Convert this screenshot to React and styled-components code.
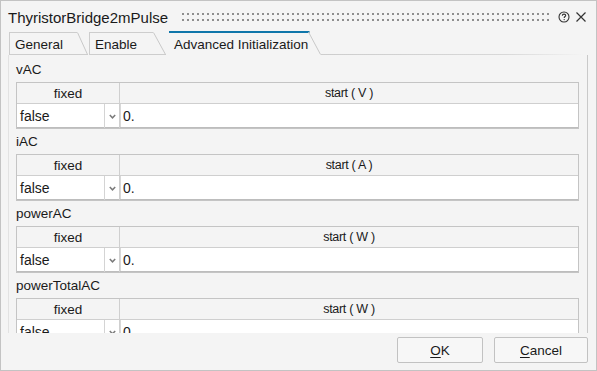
import styled, { createGlobalStyle } from "styled-components";

const GlobalStyle = createGlobalStyle`
  html, body {
    margin: 0;
    padding: 0;
    background: #f4f4f4;
  }
  body {
    font-family: "Liberation Sans", Arial, sans-serif;
    color: #1a1a1a;
  }
`;

const Window = styled.div`
  box-sizing: border-box;
  width: 597px;
  height: 371px;
  border: 1px solid #c3c3c3;
  background: #f4f4f4;
  display: flex;
  flex-direction: column;
  overflow: hidden;
`;

const TitleBar = styled.div`
  height: 30px;
  display: flex;
  align-items: center;
  padding: 2px 0 0 7px;
  box-sizing: border-box;
`;

const Title = styled.div`
  font-size: 15px;
  color: #1a1a1a;
  white-space: nowrap;
`;

const Grip = styled.div`
  flex: 1;
  height: 8px;
  margin: 0 6px 0 14px;
  position: relative;
  &::before,
  &::after {
    content: "";
    position: absolute;
    left: 0;
    right: 0;
    height: 2px;
    background: repeating-linear-gradient(
      90deg,
      #8e8e8e 0 2px,
      transparent 2px 5px
    );
  }
  &::before {
    top: 0;
  }
  &::after {
    top: 6px;
  }
`;

const TitleIcon = styled.svg`
  width: 12px;
  height: 12px;
  margin-right: ${(p) => p.$gap || 0}px;
`;

const TabBar = styled.div`
  height: 24px;
  display: flex;
  align-items: flex-end;
  padding-left: 8px;
`;

const Tab = styled.div`
  display: flex;
  height: ${(p) => (p.$active ? 24 : 23)}px;
  margin-right: ${(p) => p.$gap || 0}px;
`;

const TabFace = styled.div`
  box-sizing: border-box;
  width: ${(p) => p.$w}px;
  display: flex;
  align-items: center;
  padding-left: 5px;
  padding-top: ${(p) => (p.$active ? 0 : 1)}px;
  font-size: 13.5px;
  color: #1a1a1a;
  white-space: nowrap;
  border-top: ${(p) => (p.$active ? "2px solid #0f76aa" : "1px solid #cdcdcd")};
  border-left: ${(p) => (p.$active ? "none" : "1px solid #cdcdcd")};
  border-bottom: ${(p) => (p.$active ? "none" : "1px solid #cdcdcd")};
`;

const Slant = styled.svg`
  width: ${(p) => p.$w}px;
  height: 100%;
  display: block;
`;

const TabLine = styled.div`
  flex: 1;
  height: 1px;
  margin-right: 12px;
  background: linear-gradient(90deg, #cdcdcd 0%, #d8d8d8 70%, #f4f4f4 100%);
`;

const ScrollArea = styled.div`
  flex: 1;
  overflow: hidden;
  margin: 0 8px 0 7px;
  padding: 2px 8px 0 7px;
  border-left: 1px solid #e2e2e2;
  border-right: 1px solid #c9c9c9;
`;

const Section = styled.div`
  display: flex;
  flex-direction: column;
`;

const SectionLabel = styled.div`
  height: 25px;
  line-height: 25px;
  font-size: 13.5px;
  color: #1a1a1a;
`;

const Grid = styled.div`
  display: grid;
  grid-template-columns: 102px 1fr;
  grid-template-rows: 20px 24px;
  gap: 1px;
  border: 1px solid #c4c4c4;
  background: #cfcfcf;
`;

const HeadCell = styled.div`
  background: #f4f4f4;
  display: flex;
  align-items: center;
  justify-content: center;
  font-size: ${(p) => (p.$narrow ? 12.5 : 13.5)}px;
  letter-spacing: ${(p) => (p.$narrow ? "-0.3px" : "0")};
  color: #1a1a1a;
`;

const Combo = styled.div`
  background: #fff;
  display: flex;
  box-shadow: inset 0 -1px 0 #bdbdbd;
`;

const ComboText = styled.div`
  flex: 1;
  display: flex;
  align-items: center;
  padding-left: 3px;
  font-size: 14px;
  border-right: 1px solid #d4d4d4;
`;

const ComboArrow = styled.div`
  width: 14px;
  display: flex;
  align-items: center;
  justify-content: center;
`;

const ValueInput = styled.div`
  background: #fff;
  display: flex;
  align-items: center;
  padding-left: 3px;
  font-size: 14px;
  box-shadow: inset 0 -1px 0 #bdbdbd, inset 1px 0 0 #d8d8d8;
`;

const Footer = styled.div`
  height: 37px;
  box-sizing: border-box;
  display: flex;
  justify-content: flex-end;
  gap: 11px;
  padding: 4px 8px 0 0;
`;

const Button = styled.div`
  box-sizing: border-box;
  width: ${(p) => p.$w}px;
  height: 26px;
  border: 1px solid #c2c2c2;
  border-radius: 2px;
  background: #f7f7f7;
  display: flex;
  align-items: center;
  justify-content: center;
  font-size: 13.5px;
  color: #1a1a1a;
  & u {
    text-underline-offset: 2px;
  }
`;

const sections = [
  { name: "vAC", unit: "V" },
  { name: "iAC", unit: "A" },
  { name: "powerAC", unit: "W" },
  { name: "powerTotalAC", unit: "W" },
];

const tabs = [
  { label: "General", w: 68, slant: 11, gap: 1 },
  { label: "Enable", w: 64, slant: 13, gap: 3 },
  { label: "Advanced Initialization", w: 139, slant: 13, active: true },
];

function TabItem({ tab }) {
  const h = tab.active ? 24 : 23;
  return (
    <Tab $active={tab.active} $gap={tab.gap}>
      <TabFace $active={tab.active} $w={tab.w}>
        {tab.label}
      </TabFace>
      <Slant $w={tab.slant} viewBox={`0 0 ${tab.slant} ${h}`}>
        {!tab.active && (
          <line x1="0" y1={h - 0.5} x2={tab.slant} y2={h - 0.5} stroke="#cdcdcd" />
        )}
        {tab.active && (
          <line x1="0" y1="1" x2="1.5" y2="1" stroke="#0f76aa" strokeWidth="2" />
        )}
        <line
          x1="0.5"
          y1={tab.active ? 1 : 0.5}
          x2={tab.slant - 0.5}
          y2={h - 0.5}
          stroke="#c8c8c8"
        />
      </Slant>
    </Tab>
  );
}

function ParamTable({ section }) {
  return (
    <Section>
      <SectionLabel>{section.name}</SectionLabel>
      <Grid>
        <HeadCell>fixed</HeadCell>
        <HeadCell $narrow>start ( {section.unit} )</HeadCell>
        <Combo>
          <ComboText>false</ComboText>
          <ComboArrow>
            <svg width="7" height="5" viewBox="0 0 7 5">
              <path d="M0.8 1 L3.5 3.8 L6.2 1" fill="none" stroke="#7a7a7a" strokeWidth="1.5" />
            </svg>
          </ComboArrow>
        </Combo>
        <ValueInput>0.</ValueInput>
      </Grid>
    </Section>
  );
}

export default function App() {
  return (
    <>
      <GlobalStyle />
      <Window>
        <TitleBar>
          <Title>ThyristorBridge2mPulse</Title>
          <Grip />
          <TitleIcon viewBox="0 0 12 12" $gap={5}>
            <circle cx="6" cy="6" r="5" fill="none" stroke="#333" strokeWidth="1.1" />
            <path
              d="M4.3 4.7 C4.3 3.6 5.1 3.1 6 3.1 C6.9 3.1 7.7 3.6 7.7 4.5 C7.7 5.5 6.2 5.6 6.2 6.9"
              fill="none"
              stroke="#333"
              strokeWidth="1.1"
            />
            <circle cx="6.2" cy="8.6" r="0.7" fill="#333" />
          </TitleIcon>
          <TitleIcon viewBox="0 0 12 12" $gap={9}>
            <path d="M1.5 1.5 L10.5 10.5 M10.5 1.5 L1.5 10.5" stroke="#333" strokeWidth="1.2" />
          </TitleIcon>
        </TitleBar>
        <TabBar>
          {tabs.map((t) => (
            <TabItem key={t.label} tab={t} />
          ))}
          <TabLine />
        </TabBar>
        <ScrollArea>
          {sections.map((s) => (
            <ParamTable key={s.name} section={s} />
          ))}
        </ScrollArea>
        <Footer>
          <Button $w={86}>
            <span>
              <u>O</u>K
            </span>
          </Button>
          <Button $w={94}>
            <span>
              <u>C</u>ancel
            </span>
          </Button>
        </Footer>
      </Window>
    </>
  );
}
